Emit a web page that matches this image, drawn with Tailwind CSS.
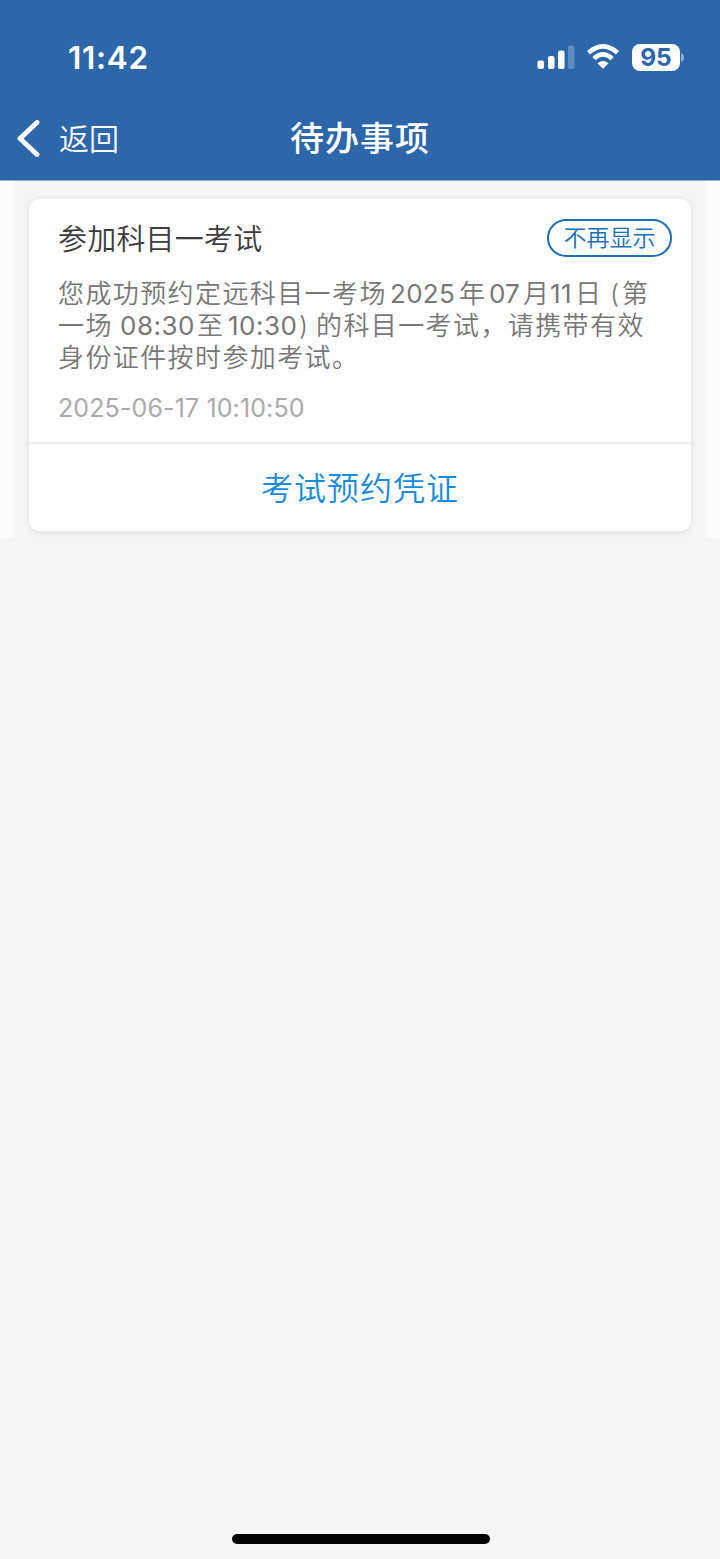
<!DOCTYPE html>
<html lang="zh-CN">
<head>
<meta charset="utf-8">
<title>待办事项</title>
<script src="https://cdn.jsdelivr.net/npm/@tailwindcss/browser@4"></script>
</head>
<body class="bg-[#f6f6f6] font-['Inter','Noto_Sans_CJK_SC',sans-serif]">
<div class="flex h-[1559px] w-[720px] flex-col overflow-hidden">
  <header class="h-[181px] shrink-0 border-b border-[#8fb2da] bg-[#2d67aa] text-white">
    <div class="flex h-[97px] items-center pt-[17px] pr-[36px] pl-[68px]">
      <span class="pt-px text-[31.5px] leading-none font-semibold tracking-[0.7px]">11:42</span>
      <svg class="ml-auto h-[26px] w-[38px]" viewBox="0 0 38 26" fill="#fff">
        <rect x="0.5" y="16.500" width="6.5" height="8.5" rx="2"/>
        <rect x="11" y="12" width="6.5" height="13" rx="2"/>
        <rect x="21" y="6.500" width="6.5" height="18.500" rx="2"/>
        <rect x="31" y="1.500" width="6.500" height="23.500" rx="2" opacity=".25"/>
      </svg>
      <svg class="ml-[12px] h-[26px] w-[32px]" viewBox="0 0 32 26" fill="none" stroke="#fff" stroke-width="4.600">
        <path d="M1.500 8.700Q16-3.800 30.500 8.700"/>
        <path d="M6.900 14.600Q16 6.300 25.100 14.600"/>
        <path d="M10.500 19.200Q16 14.700 21.500 19.200L16 24.700Z" fill="#fff" stroke="none"/>
      </svg>
      <span class="ml-[13px] flex h-[27px] w-[48px] items-center justify-center rounded-[8px] bg-white text-[24.500px] leading-none font-bold text-[#2d67aa]">95</span>
      <svg class="ml-[1px] h-[9px] w-[3px]" viewBox="0 0 4 9" preserveAspectRatio="none"><path d="M0 0Q4 1.500 4 4.500T0 9Z" fill="#8fb4e0"/></svg>
    </div>
    <div class="grid h-[83px] grid-cols-[1fr_auto_1fr] items-center px-[17px]">
      <div class="flex items-center">
        <svg class="h-[38px] w-[24px]" viewBox="0 0 24 38" fill="none" stroke="#fff" stroke-width="4.800" stroke-linecap="round" stroke-linejoin="round"><path d="M20 2.500L3 18.500L20 34.500"/></svg>
        <span class="ml-[18px] pt-px text-[30px] leading-none font-[350]">返回</span>
      </div>
      <h1 class="text-[34px] leading-none font-medium tracking-[1px]">待办事项</h1>
    </div>
  </header>
  <main class="h-[357px] shrink-0 bg-[#fcfcfc] px-[14px]">
    <div class="h-full bg-[#f6f6f6] px-[15px] pt-[18px]">
      <article class="flex h-[332px] w-[662px] flex-col rounded-[10px] bg-[#fefefe] shadow-[0_1px_7px_rgba(0,0,0,0.11)]">
        <div class="flex h-[245px] flex-col border-b-2 border-[#efefef] pr-[19px] pl-[29px]">
          <div class="mt-[20px] flex h-[38px] items-center justify-between">
            <h2 class="pt-[2px] text-[29px] leading-none font-[350] tracking-[0.2px] text-[#3c3c3c]">参加科目一考试</h2>
            <button class="flex h-[38px] w-[125px] items-center justify-center rounded-full border-2 border-[#1a6fb5] pt-px text-[23px] leading-none font-[350] text-[#1a6fb5]">不再显示</button>
          </div>
          <div class="mt-[21px] flex flex-col text-[26px] leading-[32px] font-[350] whitespace-nowrap text-[#777]">
            <div class="flex">
              <span class="w-[332px] tracking-[1.400px]">您成功预约定远科目一考场</span><span class="w-[69px] font-normal tracking-[0.300px]">2025</span><span class="w-[30px]">年</span><span class="w-[34px] font-normal">07</span><span class="w-[27px]">月</span><span class="w-[25px] font-normal tracking-[0.300px]">11</span><span class="w-[28px]">日</span><span class="w-[18px] pr-[2px] text-right">(</span><span class="pl-px">第</span>
            </div>
            <div class="flex">
              <span class="w-[62px] tracking-[1.400px]">一场</span><span class="w-[77px] font-normal tracking-[0.500px]">08:30</span><span class="w-[31px]">至</span><span class="w-[71px] font-normal tracking-[0.500px]">10:30</span><span class="w-[17px]">)</span><span class="tracking-[1.400px]">的科目一考试，请携带有效</span>
            </div>
            <div class="tracking-[1.400px]">身份证件按时参加考试。</div>
          </div>
          <time class="mt-[21px] text-[25px] leading-[26px] font-normal tracking-[0.120px] text-[#aaa]">2025-06-17 10:10:50</time>
        </div>
        <a class="flex flex-1 items-center justify-center pt-[2px] text-[32px] leading-none font-[350] tracking-[1px] text-[#1b8adb]">考试预约凭证</a>
      </article>
    </div>
  </main>
  <div class="mt-auto mb-[15px] ml-px h-[10px] w-[258px] self-center rounded-full bg-black"></div>
</div>
</body>
</html>
